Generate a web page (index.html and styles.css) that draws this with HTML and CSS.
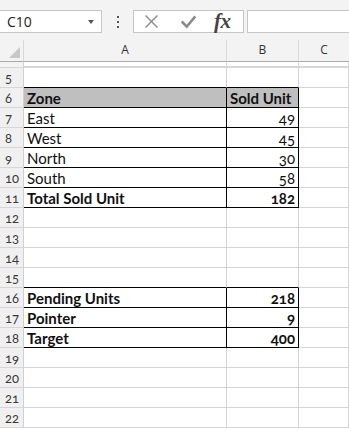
FILE: index.html
```html
<!DOCTYPE html>
<html>
<head>
<meta charset="utf-8">
<link rel="stylesheet" href="styles.css">
</head>
<body>
<div class="app">
  <div class="toolbar">
    <div class="namebox"><span class="ref">C10</span><span class="caret"></span></div>
    <div class="dots"><i></i><i></i><i></i></div>
    <div class="fnbox">
      <svg class="ico" width="20" height="20" viewBox="0 0 20 20"><path d="M3 3 L17 17 M17 3 L3 17" stroke="#8a8a8a" stroke-width="1.6" fill="none"/></svg>
      <svg class="ico" width="20" height="20" viewBox="0 0 20 20"><path d="M2 10 L8 16 L18 4" stroke="#8a8a8a" stroke-width="3" fill="none"/></svg>
      <span class="fx">fx</span>
    </div>
    <div class="formula"></div>
  </div>
  <div class="sheet">
    <div class="corner"><span class="tri"></span></div>
    <div class="colh ca">A</div>
    <div class="colh cb">B</div>
    <div class="colh cc">C</div>
    <div class="freeze rh"></div><div class="freeze"></div><div class="freeze"></div><div class="freeze"></div>

    <div class="rh">5</div><div class="c a kb"></div><div class="c b kb"></div><div class="c"></div>
    <div class="rh">6</div><div class="c a hd kb kr">Zone</div><div class="c b hd kb kr">Sold Unit</div><div class="c"></div>
    <div class="rh">7</div><div class="c a kb kr">East</div><div class="c b num kb kr">49</div><div class="c"></div>
    <div class="rh">8</div><div class="c a kb kr">West</div><div class="c b num kb kr">45</div><div class="c"></div>
    <div class="rh">9</div><div class="c a kb kr">North</div><div class="c b num kb kr">30</div><div class="c"></div>
    <div class="rh">10</div><div class="c a kb kr">South</div><div class="c b num kb kr">58</div><div class="c"></div>
    <div class="rh">11</div><div class="c a bold kb kr">Total Sold Unit</div><div class="c b num bold kb kr">182</div><div class="c"></div>
    <div class="rh">12</div><div class="c a"></div><div class="c b"></div><div class="c"></div>
    <div class="rh">13</div><div class="c a"></div><div class="c b"></div><div class="c"></div>
    <div class="rh">14</div><div class="c a"></div><div class="c b"></div><div class="c"></div>
    <div class="rh">15</div><div class="c a kb"></div><div class="c b kb"></div><div class="c"></div>
    <div class="rh">16</div><div class="c a bold kb kr">Pending Units</div><div class="c b num bold kb kr">218</div><div class="c"></div>
    <div class="rh">17</div><div class="c a bold kb kr">Pointer</div><div class="c b num bold kb kr">9</div><div class="c"></div>
    <div class="rh">18</div><div class="c a bold kb kr">Target</div><div class="c b num bold kb kr">400</div><div class="c"></div>
    <div class="rh">19</div><div class="c a"></div><div class="c b"></div><div class="c"></div>
    <div class="rh">20</div><div class="c a"></div><div class="c b"></div><div class="c"></div>
    <div class="rh">21</div><div class="c a"></div><div class="c b"></div><div class="c"></div>
    <div class="rh">22</div><div class="c a"></div><div class="c b"></div><div class="c"></div>
  </div>
</div>
</body>
</html>
```
FILE: styles.css
```css
* { box-sizing: border-box; margin: 0; padding: 0; }
html, body { width: 349px; height: 431px; overflow: hidden; background: #ffffff; }
body { font-family: "Lato", "Open Sans", sans-serif; }

.app { width: 349px; height: 431px; display: flex; flex-direction: column; background: #f3f3f3; }

.toolbar { height: 40px; display: flex; align-items: flex-start; padding-top: 10px; }
.namebox { width: 102px; height: 23px; background: #fff; border: 1px solid #c6c6c6; border-left: none; display: flex; align-items: center; justify-content: space-between; padding: 0 7px 0 7px; }
.ref { font-family: "Open Sans", sans-serif; font-size: 14px; color: #222; }
.caret { width: 0; height: 0; border-left: 3.5px solid transparent; border-right: 3.5px solid transparent; border-top: 4px solid #555; margin-top: 1px; }
.dots { width: 31px; height: 23px; display: flex; flex-direction: column; align-items: center; justify-content: center; gap: 3px; }
.dots i { display: block; width: 2px; height: 2px; background: #555; }
.fnbox { width: 111px; height: 23px; background: #fff; border: 1px solid #c6c6c6; display: flex; align-items: center; padding-left: 9px; }
.ico { display: block; }
.fnbox .ico:first-child { width: 17px; height: 17px; margin-right: 19px; }
.fnbox .ico:nth-child(2) { width: 19px; height: 17px; margin-right: 16px; }
.fx { font-family: "Liberation Serif", serif; font-style: italic; font-weight: bold; font-size: 21px; color: #444; line-height: 20px; letter-spacing: -0.5px; margin-top: -2px; }
.formula { flex: 1; height: 23px; margin-left: 3px; background: #fff; border: 1px solid #c6c6c6; border-right: none; }

.sheet { flex: 1; display: grid; grid-template-columns: 24px 203px 72px 50px; grid-template-rows: 22px 6px repeat(18, 20px); background: #fff; }
.corner { background: #f3f3f3; border-right: 1px solid #d8d8d8; border-bottom: 1px solid #ababab; position: relative; }
.tri { position: absolute; right: 3px; bottom: 3px; width: 0; height: 0; border-left: 11px solid transparent; border-bottom: 11px solid #c8c8c8; }
.colh { background: #f3f3f3; border-right: 1px solid #d8d8d8; border-bottom: 1px solid #ababab; display: flex; align-items: flex-end; justify-content: center; padding-bottom: 3px; font-family: "Open Sans", sans-serif; font-size: 12px; color: #333; }
.colh.cc { border-right: none; }
.freeze { background: #fff; border-bottom: 2px solid #d6d6d6; border-right: 1px solid #d8d8d8; }
.freeze.rh { background: #f3f3f3; }

.rh { background: #f0f0f0; border-right: 1px solid #d0d0d0; border-bottom: 1px solid #d6d6d6; font-family: "Lato", sans-serif; font-size: 13px; color: #3a3a3a; padding-left: 5px; line-height: 19px; padding-top: 1px; font-variant-numeric: oldstyle-nums; }
.c { border-right: 1px solid #d4d4d4; border-bottom: 1px solid #d4d4d4; font-size: 15px; color: #111; line-height: 17px; padding: 2px 3px 0 3px; white-space: nowrap; font-variant-numeric: oldstyle-nums; }
.num { text-align: right; }
.bold { font-weight: bold; }
.hd { background: #bfbfbf; font-weight: bold; }
.kb { border-bottom-color: #000; }
.kr { border-right-color: #000; }
```
